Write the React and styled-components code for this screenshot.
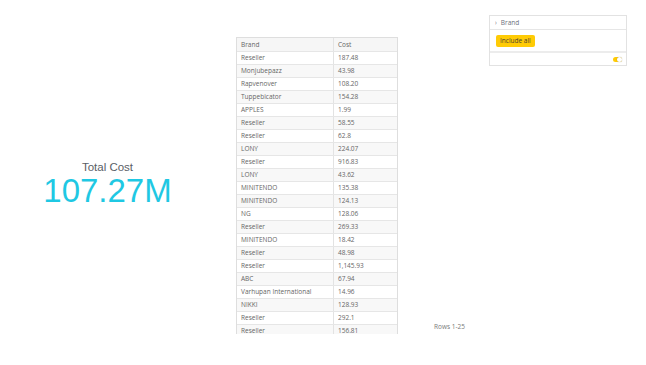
import React from 'react';
import styled, { createGlobalStyle } from 'styled-components';

const GlobalStyle = createGlobalStyle`
	html, body {
		margin: 0;
		padding: 0;
		background: #ffffff;
	}
	body {
		font-family: 'Open Sans', 'Liberation Sans', sans-serif;
	}
`;

const rows = [
	['Reseller', '187.48'],
	['Monjubepazz', '43.98'],
	['Rapvenover', '108.20'],
	['Tuppebicator', '154.28'],
	['APPLES', '1.99'],
	['Reseller', '58.55'],
	['Reseller', '62.8'],
	['LONY', '224.07'],
	['Reseller', '916.83'],
	['LONY', '43.62'],
	['MINITENDO', '135.38'],
	['MINITENDO', '124.13'],
	['NG', '128.06'],
	['Reseller', '269.33'],
	['MINITENDO', '18.42'],
	['Reseller', '48.98'],
	['Reseller', '1,145.93'],
	['ABC', '67.94'],
	['Varhupan International', '14.96'],
	['NIKKI', '128.93'],
	['Reseller', '292.1'],
	['Reseller', '156.81'],
];

const Page = styled.div`
	display: flex;
	width: 646px;
	height: 365px;
	overflow: hidden;
`;

const KpiCol = styled.div`
	width: 215px;
	display: flex;
	flex-flow: column;
	align-items: center;
	justify-content: center;
	padding-top: 2px;
	box-sizing: border-box;
`;

const KpiTitle = styled.div`
	font-family: 'Liberation Sans', Arial, sans-serif;
	font-size: 11.5px;
	color: #5a5e66;
	line-height: 14px;
`;

const KpiValue = styled.div`
	font-family: 'Liberation Sans', Arial, sans-serif;
	font-size: 33px;
	line-height: 34px;
	color: #1fc8e3;
`;

const TableCol = styled.div`
	margin-left: 21px;
	margin-top: 37px;
	width: 162px;
	height: 297px;
	overflow: hidden;
`;

const Table = styled.div`
	border: 1px solid #dedede;
	border-bottom: none;
	box-sizing: border-box;
`;

const Row = styled.div`
	display: grid;
	grid-template-columns: 96px 1fr;
	height: ${props => (props.header ? 13 : 12)}px;
	border-bottom: 1px solid #e6e6e6;
	background: ${props => (props.header ? '#f6f6f6' : props.striped ? '#f8f8f8' : '#ffffff')};
`;

const Cell = styled.div`
	font-size: 6.5px;
	color: #666666;
	line-height: ${props => (props.header ? 13 : 12)}px;
	padding-left: 4px;
	white-space: nowrap;
	overflow: hidden;
	& + & {
		border-left: 1px solid #e3e3e3;
	}
`;

const PagerCol = styled.div`
	width: 91px;
	display: flex;
	align-items: flex-end;
	padding-bottom: 33px;
	box-sizing: border-box;
`;

const Pager = styled.div`
	padding-left: 36px;
	font-size: 6.5px;
	color: #7a7a7a;
	line-height: 10px;
`;

const FilterCol = styled.div`
	margin-top: 15px;
	width: 138px;
`;

const FilterPanel = styled.div`
	border: 1px solid #e2e2e2;
	display: flex;
	flex-flow: column;
`;

const FilterHeader = styled.div`
	height: 13px;
	display: flex;
	align-items: center;
	gap: 4px;
	padding-left: 5px;
	border-bottom: 1px solid #e6e6e6;
	font-size: 6.5px;
	color: #6a6f7a;
`;

const Chevron = styled.span`
	font-size: 6px;
	color: #777;
	transform: scaleY(1.2);
`;

const FilterBody = styled.div`
	height: 21px;
	display: flex;
	align-items: center;
	padding-left: 6px;
	border-bottom: 2px solid #ececec;
`;

const IncludeAll = styled.div`
	background: #ffcb05;
	border-radius: 2px;
	padding: 0 4px;
	height: 12px;
	line-height: 12px;
	font-size: 6.5px;
	color: #4a4330;
`;

const FilterFooter = styled.div`
	height: 12px;
	display: flex;
	align-items: center;
	justify-content: flex-end;
	padding-right: 4px;
`;

const Toggle = styled.div`
	width: 9px;
	height: 5px;
	border-radius: 3px;
	background: #ffcb05;
	position: relative;
	&::after {
		content: '';
		position: absolute;
		right: 0;
		top: 0;
		width: 5px;
		height: 5px;
		border-radius: 50%;
		background: #fff;
		box-shadow: 0 0 1px rgba(0, 0, 0, 0.4);
	}
`;

export default function App() {
	return (
		<Page>
			<GlobalStyle />
			<KpiCol>
				<KpiTitle>Total Cost</KpiTitle>
				<KpiValue>107.27M</KpiValue>
			</KpiCol>
			<TableCol>
				<Table>
					<Row header>
						<Cell header>Brand</Cell>
						<Cell header>Cost</Cell>
					</Row>
					{rows.map(([brand, cost], i) => (
						<Row key={i} striped={i % 2 === 1}>
							<Cell>{brand}</Cell>
							<Cell>{cost}</Cell>
						</Row>
					))}
				</Table>
			</TableCol>
			<PagerCol>
				<Pager>Rows 1-25</Pager>
			</PagerCol>
			<FilterCol>
				<FilterPanel>
					<FilterHeader>
						<Chevron>›</Chevron>
						Brand
					</FilterHeader>
					<FilterBody>
						<IncludeAll>Include all</IncludeAll>
					</FilterBody>
					<FilterFooter>
						<Toggle />
					</FilterFooter>
				</FilterPanel>
			</FilterCol>
		</Page>
	);
}
